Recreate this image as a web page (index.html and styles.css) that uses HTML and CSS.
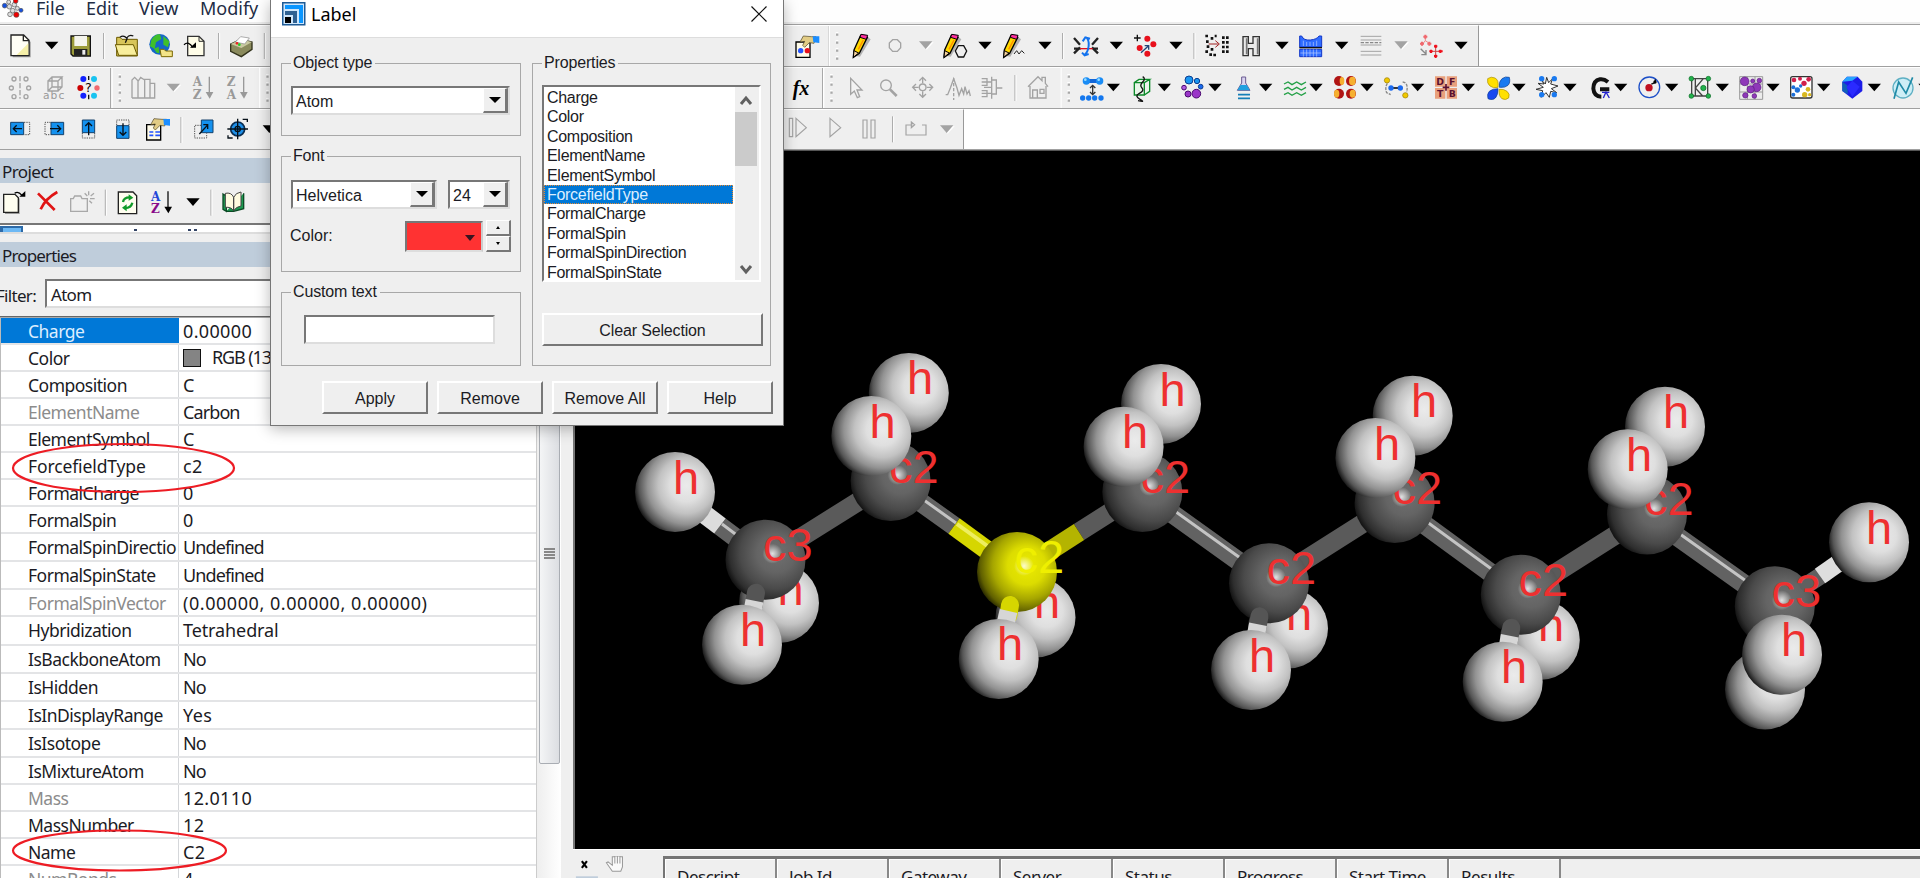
FILE: index.html
```
<!DOCTYPE html>
<html lang="en">
<head>
<meta charset="utf-8">
<title>Label</title>
<link rel="stylesheet" href="styles.css">
</head>
<body>
<svg class="defs" width="0" height="0">
  <defs>
    <g id="dn"><path d="M-20-11H20L0 12z"/></g>
    <g id="dng"><path d="M-18-8H24L3 14z" fill="#fff"/><path d="M-20-11H20L0 12z" fill="#a3a3a3"/></g>
    <g id="sep"><path d="M0-39V39" stroke="#a0a0a0" stroke-width="3"/><path d="M3-39V39" stroke="#fff" stroke-width="3"/></g>
    <g id="grip"><path d="M-27-60V60" stroke="#999" stroke-width="3"/><path d="M-23-60V60" stroke="#fff" stroke-width="4"/><path d="M-4-38h8M-4-14h8M-4 10h8M-4 34h8" stroke="#fff" stroke-width="8"/><path d="M-3-34h7M-3-10h7M-3 14h7M-3 38h7" stroke="#a8a8a8" stroke-width="7"/></g>
    <g id="pencil"><path d="M-14 30L20-28 30-20-2 32z" fill="#999" opacity=".7"/><path d="M-22 34L-20 12 0-32 20-26-4 22z" fill="#ffd800" stroke="#000" stroke-width="4"/><path d="M-22 34L-20 14-6 21z" fill="#f4d3a0" stroke="#000" stroke-width="3"/><path d="M-2-26l3-9 20 3-4 12z" fill="#ff2fa0" stroke="#000" stroke-width="3"/><path d="M-7 10L8-18" stroke="#ff8c00" stroke-width="4"/></g>
    <g id="props"><path d="M-34-14H8V32H-34z" fill="#fffbe8" stroke="#000" stroke-width="4"/><path d="M-22-14l10-18 24 2 14 0-6 20-14-2-14 14-6-6 6-12z" fill="#e2cc85" stroke="#4a4020" stroke-width="2"/><path d="M16-31h20v20l-18-2z" fill="#1b8dff"/></g>
    <radialGradient id="gh" cx=".64" cy=".42" r=".67"><stop offset="0" stop-color="#ebebeb"/><stop offset=".3" stop-color="#dfdfdf"/><stop offset=".52" stop-color="#c2c2c2"/><stop offset=".72" stop-color="#929292"/><stop offset=".88" stop-color="#565656"/><stop offset="1" stop-color="#0c0c0c"/></radialGradient>
    <radialGradient id="gc" cx=".63" cy=".42" r=".68"><stop offset="0" stop-color="#707070"/><stop offset=".35" stop-color="#646464"/><stop offset=".65" stop-color="#4a4a4a"/><stop offset=".85" stop-color="#2e2e2e"/><stop offset="1" stop-color="#060606"/></radialGradient>
    <radialGradient id="gs" cx=".62" cy=".42" r=".68"><stop offset="0" stop-color="#ecec00"/><stop offset=".35" stop-color="#dcdc00"/><stop offset=".62" stop-color="#a6a600"/><stop offset=".85" stop-color="#606000"/><stop offset="1" stop-color="#0c0c00"/></radialGradient>
    <radialGradient id="spec"><stop offset="0" stop-color="#fff" stop-opacity=".8"/><stop offset="1" stop-color="#fff" stop-opacity="0"/></radialGradient>
    <circle id="h" r="40" fill="url(#gh)"/>
    <g id="c"><circle r="40" fill="url(#gc)"/><circle cx="7" cy="-6" r="10" fill="url(#spec)"/></g>
    <g id="stub"><path d="M-9.500 33L-12 46" stroke="#555" stroke-width="18" stroke-linecap="round"/><path d="M-11 41L-17 72" stroke="#d6d6d6" stroke-width="18"/></g>
  </defs>
</svg>

<div class="app">
  <nav class="menubar">
    <svg class="logo" width="28" height="24" viewBox="0 0 84 72"><g stroke="#555" stroke-width="2"><g fill="#ddd"><circle cx="26" cy="6" r="6"/><circle cx="43" cy="14" r="7"/><circle cx="28" cy="20" r="7"/><circle cx="38" cy="32" r="7"/><circle cx="52" cy="25" r="6"/><circle cx="30" cy="43" r="7"/></g><circle cx="47" cy="3" r="7" fill="#e00"/><circle cx="14" cy="17" r="7" fill="#1550e0"/><circle cx="49" cy="44" r="8" fill="#e00"/><circle cx="63" cy="31" r="6" fill="#1550e0"/></g></svg>
    <span class="m1">File</span><span class="m2">Edit</span><span class="m3">View</span><span>Modify</span>
  </nav>

  <div class="bar">
    <div class="tools">
      <svg width="40" viewBox="0 75 120 123"><path d="M38 110h38l16 16v46H38z" fill="#999"/><path d="M33 105h38l16 16v46H33z" fill="#fffef5" stroke="#222" stroke-width="4"/><path d="M85 130v35H50z" fill="#f5efa8"/><path d="M70 105v17h17" fill="none" stroke="#222" stroke-width="4"/></svg>
      <svg width="23" viewBox="120 75 69 123"><use href="#dn" x="155" y="136"/></svg>
      <svg width="34" viewBox="189 75 102 123"><path d="M213 108h58v60h-52l-6-6z" fill="#9c9c3a" stroke="#111" stroke-width="4"/><path d="M223 108h38v30h-38z" fill="#f4f4ec"/><path d="M222 147h40v20h-40z" fill="#222"/><path d="M247 150h9v14h-9z" fill="#eee"/></svg>
      <svg width="13" viewBox="291 75 39 123"><use href="#sep" x="311" y="138"/></svg>
      <svg width="34" viewBox="330 75 102 123"><path d="M350 112h10l6 6h46v50h-62z" fill="#d8c55a" stroke="#6b5a00" stroke-width="3"/><path d="M346 134h54l12 32h-56z" fill="#f8ee9c" stroke="#6b5a00" stroke-width="3"/><path d="M360 112q10-8 20 2q8-12 20-6M376 128l6-14" fill="none" stroke="#111" stroke-width="4"/></svg>
      <svg width="34" viewBox="432 75 102 123"><circle cx="479" cy="133" r="31" fill="#1566c8"/><path d="M454 120q10-18 26-17l4 14-16 10-4 20-14-8zM490 108l18 16-4 18-14-8zM462 146l14-6 2 20-8-2z" fill="#3fc02a"/><path d="M480 148h12l5 5h20v17h-33z" fill="#f3e488" stroke="#7a6600" stroke-width="3"/></svg>
      <svg width="35" viewBox="534 75 105 123"><path d="M563 109h34l15 15v43h-49z" fill="#fffde8" stroke="#333" stroke-width="4"/><path d="M597 109v15h15" fill="none" stroke="#333" stroke-width="3"/><path d="M552 134q14-12 26 8" fill="none" stroke="#000" stroke-width="4"/><path d="M570 143h18v-16z"/></svg>
      <svg width="12" viewBox="639 75 36 123"><use href="#sep" x="656" y="138"/></svg>
      <svg width="34" viewBox="675 75 102 123"><path d="M692 132l30-14 34 8v22l-32 22-32-16z" fill="#8b8b5d" stroke="#33331c" stroke-width="4"/><path d="M692 132l32 12 32-18-34-8z" fill="#c9c9a0"/><path d="M706 126l16-16 26 4-14 18z" fill="#fff" stroke="#888" stroke-width="2"/><circle cx="711" cy="130" r="4" fill="#e22"/><circle cx="718" cy="134" r="4" fill="#2c2"/></svg>
      <svg width="11" viewBox="777 75 33 123"><use href="#sep" x="793" y="138"/></svg>
    </div>
    <div class="under"></div>
    <div class="tools edge">
      <svg width="44" viewBox="12 75 132 123"><use href="#props" x="82" y="140"/><circle cx="62" cy="152" r="8" fill="#2453ff"/><circle cx="82" cy="152" r="8" fill="#e8101c"/></svg>
      <svg width="18" viewBox="144 75 54 123"><use href="#grip" x="171" y="138"/></svg>
      <svg width="30" viewBox="198 75 90 123"><use href="#pencil" x="242" y="138"/></svg>
      <svg width="34" viewBox="288 75 102 123"><path d="M338 119h14l10 10v14l-10 11h-14l-10-11v-14z" fill="none" stroke="#a3a3a3" stroke-width="4"/></svg>
      <svg width="28" viewBox="390 75 84 123"><use href="#dng" x="437" y="135"/></svg>
      <svg width="36" viewBox="474 75 108 123"><use href="#pencil" x="514" y="138"/><path d="M535 137h16l9 16-9 18h-16l-9-18z" fill="#efefef" stroke="#111" stroke-width="4"/></svg>
      <svg width="24" viewBox="582 75 72 123"><use href="#dn" x="615" y="136"/></svg>
      <svg width="36" viewBox="654 75 108 123"><use href="#pencil" x="693" y="138"/><path d="M702 162l8-10 7 10 8-10 8 8" fill="none" stroke="#222" stroke-width="3"/></svg>
      <svg width="22" viewBox="762 75 66 123"><use href="#dn" x="795" y="136"/></svg>
      <svg width="12" viewBox="828 75 36 123"><use href="#sep" x="848" y="138"/></svg>
      <svg width="36" viewBox="864 75 108 123"><path d="M882 114l18 20M882 160l18-18M882 146h20M954 114l-18 20M954 160l-18-18M954 146h-16" fill="none" stroke="#222" stroke-width="7"/><path d="M900 146h38" stroke="#e01020" stroke-width="4"/><path d="M918 112q10 8 8 26t-12 26M908 124l8-12 14 4M906 158l8 8 12-4" fill="none" stroke="#1272ee" stroke-width="6"/></svg>
      <svg width="24" viewBox="972 75 72 123"><use href="#dn" x="1009" y="136"/></svg>
      <svg width="32" viewBox="1044 75 96 123"><path d="M1062 114h20M1072 104v20" stroke="#111" stroke-width="4"/><path d="M1083 158l22-20M1094 137h12v12" fill="none" stroke="#247" stroke-width="4"/><g fill="#e8101c"><circle cx="1102" cy="116" r="9"/><circle cx="1120" cy="133" r="9"/><circle cx="1079" cy="144" r="9"/><circle cx="1102" cy="161" r="9"/></g></svg>
      <svg width="28" viewBox="30 75 84 123"><use href="#dn" x="78" y="136"/></svg>
      <svg width="12" viewBox="114 75 36 123"><use href="#sep" x="132" y="138"/></svg>
      <svg width="36" viewBox="150 75 108 123"><path d="M166 108h8M182 115h8M168 125h8M170 140h8M182 148h8M166 155h8M178 164h8M194 108h6M190 165h8M216 113h24M216 127h24M216 141h24M216 155h24" stroke="#111" stroke-width="8" stroke-dasharray="8 4"/><path d="M176 132h28M196 122l12 10-12 10" fill="none" stroke="#a02020" stroke-width="3"/></svg>
      <svg width="30" viewBox="258 75 90 123"><path d="M279 110h16v20h14v-20h19v57h-19v-21h-14v21h-16z" fill="#e9e9e9" stroke="#333" stroke-width="4"/><path d="M290 115v48M323 115v48" stroke="#777" stroke-width="5"/></svg>
      <svg width="28" viewBox="348 75 84 123"><use href="#dn" x="396" y="136"/></svg>
      <svg width="34" viewBox="432 75 102 123"><path d="M449 108h6q6 14 26 12t26-12h8v33h-66zM449 148h66v22h-66z" fill="#2f6cff" stroke="#1538c8" stroke-width="3"/><path d="M460 122v16M470 126v12M480 126v12M490 126v12M500 122v16M451 159h62M460 148v22M470 148v22M480 148v22M490 148v22M500 148v22" stroke="#b8ccff" stroke-width="2"/><path d="M448 143h68" stroke="#111" stroke-width="4"/></svg>
      <svg width="28" viewBox="534 75 84 123"><use href="#dn" x="575" y="136"/></svg>
      <svg width="31" viewBox="618 75 93 123"><path d="M632 109h62M632 120h62M632 135h62M632 154h62M632 165h62" stroke="#a3a3a3" stroke-width="3"/><path d="M632 128h62" stroke="#888" stroke-width="4" stroke-dasharray="10 4"/></svg>
      <svg width="28" viewBox="711 75 84 123"><use href="#dng" x="753" y="135"/></svg>
      <svg width="33" viewBox="795 75 99 123"><path d="M826 110v12l-8 10M826 122l12 8" fill="none" stroke="#e88" stroke-width="3"/><path d="M820 110h12M826 104v12M810 131h12M816 125v12M832 131h12M838 125v12" stroke="#f0686e" stroke-width="6"/><path d="M812 146l16 16M828 150v14h-14" fill="none" stroke="#888" stroke-width="4"/><path d="M840 154h36M857 137v34" stroke="#c44" stroke-width="3"/><path d="M838 154h10M866 154h12M857 134v10M857 164v10M852 139h10M852 168h10M843 149v10M871 149v10" stroke="#f0101c" stroke-width="6"/></svg>
      <svg width="30" viewBox="894 75 90 123"><use href="#dn" x="933" y="136"/></svg>
    </div>
  </div>

  <div class="bar">
    <div class="tools">
      <svg width="37" viewBox="0 201 111 123"><g fill="none" stroke="#a3a3a3" stroke-width="4"><circle cx="42" cy="237" r="6"/><circle cx="78" cy="237" r="6"/><circle cx="34" cy="264" r="6"/><circle cx="86" cy="264" r="6"/><circle cx="42" cy="290" r="6"/><circle cx="78" cy="290" r="6"/><path d="M60 228v68" stroke-dasharray="16 5"/></g></svg>
      <svg width="35" viewBox="111 201 105 123"><path d="M144 243h30v30h-30zM144 243l12-12h30l-12 12M186 231v30l-12 12M156 231v30h30M144 273l12-12" fill="none" stroke="#a3a3a3" stroke-width="4"/><text x="129" y="298" class="ic" font-size="32" textLength="64" fill="#999">abc</text></svg>
      <svg width="38" viewBox="216 201 114 123"><circle cx="250" cy="237" r="9" fill="#12f"/><circle cx="282" cy="237" r="9" fill="#19c3f0"/><circle cx="241" cy="264" r="9" fill="#c00"/><circle cx="291" cy="264" r="8" fill="#f06a70"/><circle cx="250" cy="287" r="9" fill="#12f"/><circle cx="282" cy="287" r="9" fill="#19c3f0"/><text x="255" y="276" class="ic" font-size="38">?</text><path d="M266 228v12M266 284v14" stroke="#111" stroke-width="4"/></svg>
      <svg width="17" viewBox="330 201 51 123"><use href="#grip" x="359" y="264"/></svg>
      <svg width="35" viewBox="381 201 105 123"><path d="M396 294v-54l8-8 10 10v52M414 294v-50l8-12 12 8v54M434 294v-56h16v56M450 294v-44h14v44zM396 294h68" fill="none" stroke="#a3a3a3" stroke-width="4"/></svg>
      <svg width="25" viewBox="486 201 75 123"><use href="#dng" x="520" y="262"/></svg>
      <svg width="34" viewBox="561 201 102 123"><text x="578" y="258" class="az" fill="#999">A</text><text x="578" y="296" class="az" fill="#999">Z</text><path d="M628 230v54" stroke="#999" stroke-width="4"/><path d="M617 276h23l-11 20z" fill="#999"/></svg>
      <svg width="38" viewBox="663 201 114 123"><text x="680" y="258" class="az" fill="#999">Z</text><text x="680" y="296" class="az" fill="#999">A</text><path d="M731 230v54" stroke="#999" stroke-width="4"/><path d="M720 276h23l-11 20z" fill="#999"/></svg>
      <svg width="11" viewBox="777 201 33 123"><use href="#grip" x="802" y="264"/></svg>
    </div>
    <div class="under"></div>
    <div class="tools grow">
      <svg width="38" viewBox="12 201 114 123"><text x="38" y="284" class="fx">fx</text></svg>
      <svg width="20" viewBox="126 201 60 123"><use href="#grip" x="154" y="264"/></svg>
      <svg width="32" viewBox="186 201 96 123"><path d="M212 235v48l11-10 9 20 7-3-8-20h15z" fill="#f3f3f3" stroke="#a3a3a3" stroke-width="4"/></svg>
      <svg width="31" viewBox="282 201 93 123"><circle cx="318" cy="256" r="16" fill="none" stroke="#a3a3a3" stroke-width="4"/><path d="M330 268l20 20" stroke="#a3a3a3" stroke-width="8"/></svg>
      <svg width="34" viewBox="375 201 102 123"><circle cx="428" cy="262" r="10" fill="none" stroke="#a3a3a3" stroke-width="4"/><path d="M428 250v-18M428 274v18M416 262h-18M440 262h18M418 242l10-10 10 10M418 282l10 10 10-10M408 252l-10 10 10 10M448 252l10 10-10 10" fill="none" stroke="#a3a3a3" stroke-width="4"/></svg>
      <svg width="36" viewBox="477 201 108 123"><path d="M497 284h6l8-20 10-28 10 28 6 22 8-20 6 16 4-22 6 22 6-10 4 16" fill="none" stroke="#a3a3a3" stroke-width="4"/><path d="M521 234v66" stroke="#a3a3a3" stroke-width="4" stroke-dasharray="10 5"/></svg>
      <svg width="33" viewBox="585 201 99 123"><path d="M605 236h16v20h-16M605 246h16M621 246h14M605 272h16v18h-16M605 280h30M635 230v66M635 240h14v42h-14M649 264h18M612 262h22" fill="none" stroke="#a3a3a3" stroke-width="4"/></svg>
      <svg width="14" viewBox="684 201 42 123"><use href="#sep" x="705" y="264"/></svg>
      <svg width="38" viewBox="726 201 114 123"><path d="M744 260l30-30 12 12v-10h10v18l8 10M750 258v36h48v-36M758 294v-24h14v24M780 268h12v12h-12z" fill="none" stroke="#a3a3a3" stroke-width="4"/></svg>
      <svg width="17" viewBox="840 201 51 123"><use href="#grip" x="866" y="264"/></svg>
      <svg width="30" viewBox="891 201 90 123"><path d="M914 243h50" stroke="#1266d8" stroke-width="12"/><circle cx="919" cy="243" r="11" fill="#1a8cf5"/><circle cx="959" cy="243" r="11" fill="#1a8cf5"/><circle cx="916" cy="239" r="4" fill="#9df"/><circle cx="956" cy="239" r="4" fill="#9df"/><path d="M938 256v28M930 264l8-8 8 8M930 276l8 8 8-8" fill="none" stroke="#333" stroke-width="4"/><g fill="#1377ee"><circle cx="908" cy="294" r="8"/><circle cx="926" cy="294" r="8"/><circle cx="944" cy="294" r="8"/><circle cx="963" cy="294" r="8"/></g></svg>
      <svg width="19" viewBox="981 201 57 123"><use href="#dn" x="1000" y="262"/></svg>
      <svg width="29" viewBox="1038 201 87 123"><path d="M1063 248h30v37h-30zM1063 248l14-10h32l-16 10M1109 238v36l-16 11" fill="#e8f5e8" stroke="#0d8a2a" stroke-width="4"/><path d="M1088 230q10 6 0 16t-2 18-8 16 2 18-6 4" fill="none" stroke="#111" stroke-width="4"/></svg>
      <svg width="22" viewBox="15 201 66 123"><use href="#dn" x="43" y="262"/></svg>
      <svg width="31" viewBox="81 201 93 123"><circle cx="117" cy="240" r="12" fill="#1a96f0" stroke="#0b3d91" stroke-width="3"/><circle cx="141" cy="243" r="8" fill="#1a96f0" stroke="#0b3d91" stroke-width="3"/><circle cx="152" cy="260" r="7" fill="#1a6af0" stroke="#0b3d91" stroke-width="3"/><circle cx="139" cy="281" r="13" fill="#9a35c8" stroke="#4b0a70" stroke-width="3"/><circle cx="114" cy="282" r="9" fill="#9a35c8" stroke="#4b0a70" stroke-width="3"/><circle cx="102" cy="263" r="7" fill="#b05adf" stroke="#4b0a70" stroke-width="3"/></svg>
      <svg width="24" viewBox="174 201 72 123"><use href="#dn" x="195" y="262"/></svg>
      <svg width="25" viewBox="246 201 75 123"><path d="M275 231h12v18l13 22h-38l13-22z" fill="#d9d4f0" stroke="#6a5a90" stroke-width="3"/><path d="M272 255h18l10 16h-38z" fill="#20a0e0"/><path d="M264 284h36M264 295h36" stroke="#157fb8" stroke-width="5"/></svg>
      <svg width="22" viewBox="321 201 66 123"><use href="#dn" x="347" y="262"/></svg>
      <svg width="30" viewBox="387 201 90 123"><path d="M402 252l12-6 12 8 14-8 14 8 14-8M402 268l12-6 12 8 14-8 14 8 14-8M402 284l12-6 12 8 14-8 14 8 14-8" fill="none" stroke="#23a046" stroke-width="4"/></svg>
      <svg width="20" viewBox="477 201 60 123"><use href="#dn" x="498" y="262"/></svg>
      <svg width="31" viewBox="537 201 93 123"><g fill="#b01414"><ellipse cx="567" cy="243" rx="15" ry="15"/><ellipse cx="603" cy="243" rx="15" ry="15"/><ellipse cx="567" cy="281" rx="15" ry="15"/><ellipse cx="603" cy="281" rx="15" ry="15"/></g><g fill="#f6b030"><ellipse cx="576" cy="243" rx="7" ry="12"/><ellipse cx="607" cy="243" rx="10" ry="13"/><ellipse cx="560" cy="281" rx="8" ry="12"/><ellipse cx="608" cy="281" rx="9" ry="12"/></g></svg>
      <svg width="21" viewBox="630 201 63 123"><use href="#dn" x="651" y="262"/></svg>
      <svg width="30" viewBox="693 201 90 123"><path d="M722 264h32" stroke="#111" stroke-width="5"/><circle cx="723" cy="264" r="8" fill="#1a6af0"/><circle cx="751" cy="264" r="8" fill="#1a6af0"/><path d="M712 250q-8 14-2 28l12 6M758 246q18 2 12 30" fill="none" stroke="#888" stroke-width="4" stroke-dasharray="9 3"/><circle cx="711" cy="241" r="8" fill="#f0c800" stroke="#9a7c00" stroke-width="2"/><circle cx="766" cy="286" r="8" fill="#f0c800" stroke="#9a7c00" stroke-width="2"/></svg>
      <svg width="20" viewBox="783 201 60 123"><use href="#dn" x="803" y="262"/></svg>
      <svg width="30" viewBox="843 201 90 123"><path d="M855 229h31v31h-31zM890 229h31v31h-31zM855 264h31v32h-31zM890 264h31v32h-31z" fill="#e9a07c"/><g class="ic" font-size="28" font-weight="bold" fill="#5b1030"><text x="859" y="254">D</text><text x="897" y="254">F</text><text x="861" y="291">T</text><text x="896" y="291">B</text></g><path d="M888 252v20M878 262h20" stroke="#5b1030" stroke-width="5"/></svg>
      <svg width="21" viewBox="933 201 63 123"><use href="#dn" x="955" y="262"/></svg>
      <svg width="29" viewBox="996 201 87 123"><path d="M1013 236q10-8 22-2t9 28q-14 4-24-4t-7-22z" fill="#ffe000" stroke="#a88b00" stroke-width="2"/><path d="M1078 232q4 16-4 24t-26 6q-2-18 8-26t22-4z" fill="#1a7af0" stroke="#0b3d91" stroke-width="2"/><path d="M1014 296q-4-14 4-22t26-8q0 20-8 28t-22 2z" fill="#1a4af0" stroke="#0b3d91" stroke-width="2"/><path d="M1076 294q-10 8-20 2t-9-28q14-2 24 6t5 20z" fill="#ffe000" stroke="#a88b00" stroke-width="2"/></svg>
      <svg width="21" viewBox="1083 201 63 123"><use href="#dn" x="1107" y="262"/></svg>
      <svg width="30" viewBox="-24 201 90 123"><path d="M4 240l12 12 4-20 6 16 12-12-6 16 22 6-20 8 16 12-18-4-4 18-10-14-14 14 4-20-20-4 22-6-16-12 18 2z" fill="#fff" stroke="#333" stroke-width="3"/><g fill="#1a7af0"><circle cx="5" cy="236" r="8"/><circle cx="43" cy="236" r="8"/><circle cx="5" cy="284" r="8"/><circle cx="43" cy="284" r="8"/></g></svg>
      <svg width="21" viewBox="66 201 63 123"><use href="#dn" x="90" y="262"/></svg>
      <svg width="30" viewBox="129 201 90 123"><path d="M204 246q-12-10-24-8-20 4-20 28 2 24 24 24M180 268h28" fill="none" stroke="#111" stroke-width="12"/><path d="M190 294l8-18 10 18M186 277h22" stroke="#22c" stroke-width="4" fill="none"/></svg>
      <svg width="21" viewBox="219 201 63 123"><use href="#dn" x="242" y="262"/></svg>
      <svg width="31" viewBox="282 201 93 123"><circle cx="328" cy="262" r="31" fill="none" stroke="#1c4fc8" stroke-width="4"/><circle cx="327" cy="263" r="11" fill="#c01020"/><path d="M334 252q14-2 12-14" fill="none" stroke="#111" stroke-width="4"/><circle cx="345" cy="246" r="5"/></svg>
      <svg width="20" viewBox="375 201 60 123"><use href="#dn" x="395" y="262"/></svg>
      <svg width="30" viewBox="435 201 90 123"><path d="M455 236h48v52h-48zM466 236v52M490 236l-24 28 22 24" fill="none" stroke="#444" stroke-width="4"/><g fill="#22b14c" stroke="#0a6a24" stroke-width="2"><circle cx="454" cy="236" r="7"/><circle cx="505" cy="236" r="7"/><circle cx="454" cy="288" r="7"/><circle cx="505" cy="288" r="7"/><circle cx="490" cy="264" r="8"/></g></svg>
      <svg width="20" viewBox="525 201 60 123"><use href="#dn" x="547" y="262"/></svg>
      <svg width="31" viewBox="585 201 93 123"><path d="M599 230h69v68h-69zM599 252h69M599 276h69M622 230v68M645 230v68" fill="#ececec" stroke="#999" stroke-width="3"/><g fill="#8e38b8" stroke="#5b1a80" stroke-width="2"><circle cx="614" cy="244" r="13"/><circle cx="650" cy="262" r="13"/><circle cx="632" cy="268" r="11"/><circle cx="658" cy="242" r="7"/><circle cx="616" cy="286" r="8"/><circle cx="643" cy="288" r="7"/><circle cx="638" cy="243" r="6"/></g></svg>
      <svg width="20" viewBox="678 201 60 123"><use href="#dn" x="699" y="262"/></svg>
      <svg width="31" viewBox="738 201 93 123"><rect x="752" y="230" width="64" height="64" rx="6" fill="#fff" stroke="#333" stroke-width="4"/><g fill="#d0204c"><circle cx="762" cy="240" r="7"/><circle cx="780" cy="236" r="6"/><circle cx="792" cy="250" r="8"/><circle cx="806" cy="238" r="7"/></g><g fill="#1c6fd8"><circle cx="760" cy="262" r="6"/><circle cx="772" cy="270" r="8"/><circle cx="760" cy="284" r="6"/><circle cx="782" cy="258" r="5"/></g><g fill="#d8b820"><circle cx="804" cy="268" r="7"/><circle cx="794" cy="284" r="8"/><circle cx="809" cy="284" r="5"/></g></svg>
      <svg width="20" viewBox="831 201 60 123"><use href="#dn" x="851" y="262"/></svg>
      <svg width="30" viewBox="891 201 90 123"><path d="M921 230h32l14 15v28l-30 23-30-23v-28z" fill="#1c1ce8"/><path d="M921 230h32l-16 12-30 3z" fill="#28a4ff"/><path d="M907 245l16 12v26l-16-10z" fill="#1060b8"/><path d="M937 242l22 18-22 30-18-28z" fill="#2a2aff"/></svg>
      <svg width="20" viewBox="981 201 60 123"><use href="#dn" x="1003" y="262"/></svg>
      <svg width="34" viewBox="1041 201 102 123"><circle cx="1089" cy="264" r="30" fill="#cdeef6" stroke="#5fb0c4" stroke-width="4"/><path d="M1062 296l14-50 22 34 20-48" fill="none" stroke="#1e8aa6" stroke-width="5"/><use href="#dn" x="1155" y="262"/></svg>
    </div>
  </div>

  <div class="bar third">
    <div class="tools">
      <svg width="36" viewBox="0 327 108 120"><path d="M72 367h17v37h-17" class="dots"/><path d="M32 367h39v37h-39z" class="bl"/><path d="M66 386h-26M50 376l-10 10 10 10" class="ar"/></svg>
      <svg width="34" viewBox="108 327 102 120"><path d="M152 367h-17v37h17" class="dots"/><path d="M153 367h38v37h-38z" class="bl"/><path d="M150 386h30M172 376l10 10-10 10" class="ar"/></svg>
      <svg width="34" viewBox="210 327 102 120"><path d="M247 399v15h37v-15" class="dots"/><path d="M247 360h37v38h-37z" class="bl"/><path d="M266 406v-38M256 378l10-10 10 10" class="ar"/></svg>
      <svg width="36" viewBox="312 327 108 120"><path d="M350 375v-15h37v15" class="dots"/><path d="M350 377h37v38h-37z" class="bl"/><path d="M369 370v36M359 396l10 10 10-10" class="ar"/></svg>
      <svg width="35" viewBox="420 327 105 120"><use href="#props" x="474" y="388"/><path d="M448 396h12M466 396h14M448 406h12M466 406h14" stroke="#2453ff" stroke-width="5"/></svg>
      <svg width="12" viewBox="525 327 36 120"><use href="#sep" x="543" y="390"/></svg>
      <svg width="36" viewBox="561 327 108 120"><path d="M603 376h-19v38h36v-14" class="dots"/><path d="M604 360h35v38h-35z" class="bl"/><path d="M598 402l24-26M610 374h13v13" class="ar"/></svg>
      <svg width="33" viewBox="669 327 99 120"><circle cx="713" cy="387" r="21" fill="#1e8fe8" stroke="#0a2c50" stroke-width="5"/><path d="M713 356v62M682 387h62" class="ar"/><circle cx="713" cy="387" r="8" class="ar"/><path d="M728 358h14v8M698 414h-14v-8" class="ar"/></svg>
      <svg width="14" viewBox="768 327 42 120"><use href="#dn" x="808" y="387"/></svg>
    </div>
    <div class="under"></div>
    <div class="tools edge">
      <svg width="30" viewBox="12 327 90 120"><path d="M28 355h10v55h-10zM48 355l31 28-31 27z" class="gl"/></svg>
      <svg width="36" viewBox="102 327 108 120"><path d="M150 355l32 28-32 27z" class="gl"/></svg>
      <svg width="36" viewBox="210 327 108 120"><path d="M249 360h12v54h-12zM273 360h12v54h-12z" class="gl"/></svg>
      <svg width="13" viewBox="318 327 39 120"><use href="#sep" x="338" y="388"/></svg>
      <svg width="34" viewBox="357 327 102 120"><path d="M388 375h-10v30h60v-30h-12M388 375h10M394 366l10 8-10 9z" class="gl"/></svg>
      <svg width="30" viewBox="459 327 90 120"><use href="#dng" x="500" y="387"/></svg>
    </div>
  </div>

  <main class="work">
    <aside class="side">
      <h2 class="cap">Project</h2>
      <div class="ptools">
        <svg width="36" viewBox="0 552 108 117"><path d="M15 586h34l10 10v46h-44z" fill="#999"/><path d="M11 583h34l10 10v44h-44z" fill="#fffef0" stroke="#222" stroke-width="4"/><path d="M44 580q10-8 22 6" fill="none" stroke="#000" stroke-width="4"/><path d="M58 590h18v-17z"/></svg>
        <svg width="32" viewBox="108 552 96 117"><path d="M114 580l50 50M172 576q-36 20-50 52" fill="none" stroke="#e01414" stroke-width="8"/></svg>
        <svg width="34" viewBox="204 552 102 117"><path d="M212 634v-38h8l4-8h18l4 8h16v38z" fill="none" stroke="#a8a8a8" stroke-width="4"/><path d="M266 574v12M254 580l8 8M282 580l-10 8M270 596h14M268 602l8 8" stroke="#a8a8a8" stroke-width="4"/></svg>
        <svg width="36" viewBox="306 552 108 117"><use href="#sep" x="316" y="608"/><path d="M355 576h44l11 11v54h-55z" fill="#fffef0" stroke="#222" stroke-width="4"/><path d="M369 606q2-14 20-14M397 608q-4 16-22 16" fill="none" stroke="#109a28" stroke-width="7"/><path d="M386 583l14 10-14 9zM380 613l-14 10 14 11z" fill="#109a28"/></svg>
        <svg width="36" viewBox="414 552 108 117"><text x="453" y="604" class="az" fill="#2546d8">A</text><text x="453" y="640" class="az" fill="#8a0a8a">Z</text><path d="M504 574v56" stroke="#111" stroke-width="4"/><path d="M493 620h23l-11 20z"/></svg>
        <svg width="34" viewBox="522 552 102 117"><use href="#dn" x="579" y="606"/></svg>
        <svg width="46" viewBox="624 552 138 117"><use href="#sep" x="633" y="608"/><path d="M669 582l10 6v46l-10-6zM679 634h22l30-8v-46" fill="#1c9a50" stroke="#0b4a24" stroke-width="4"/><path d="M676 580q18-4 25 12v40q-8-12-25-10zM701 592q6-14 22-16v42q-14 2-22 14z" fill="#fffbe0" stroke="#444" stroke-width="3"/></svg>
      </div>
      <div class="tree"><svg width="270" height="7" viewBox="0 0 270 7"><path d="M0 1h23v6H0z" fill="#2d6aa8"/><path d="M3 3h18v4H3z" fill="#6cb8f4"/><path d="M134 5h3M188 5h3M194 5h3" stroke="#346" stroke-width="2"/></svg></div>
      <h2 class="cap cap2">Properties</h2>
      <div class="filter"><span>Filter:</span><div class="fbox">Atom</div></div>
      <div class="gridwrap">
        <div class="grid">
          <div class="r sel"><b>Charge</b><i>0.00000</i></div>
          <div class="r"><b>Color</b><i class="rgb"><span class="chip"></span>RGB (132, 132, 132)</i></div>
          <div class="r"><b>Composition</b><i>C</i></div>
          <div class="r dim"><b>ElementName</b><i class="word">Carbon</i></div>
          <div class="r"><b>ElementSymbol</b><i>C</i></div>
          <div class="r"><b class="wide">ForcefieldType</b><i>c2</i></div>
          <div class="r"><b>FormalCharge</b><i>0</i></div>
          <div class="r"><b>FormalSpin</b><i>0</i></div>
          <div class="r tall"><b>FormalSpinDirectio</b><i class="word">Undefined</i></div>
          <div class="r tall"><b>FormalSpinState</b><i class="word">Undefined</i></div>
          <div class="r dim"><b>FormalSpinVector</b><i class="nums">(0.00000, 0.00000, 0.00000)</i></div>
          <div class="r tall"><b>Hybridization</b><i class="tetra">Tetrahedral</i></div>
          <div class="r tall"><b>IsBackboneAtom</b><i class="word">No</i></div>
          <div class="r tall"><b>IsHidden</b><i class="word">No</i></div>
          <div class="r tall"><b>IsInDisplayRange</b><i>Yes</i></div>
          <div class="r tall"><b>IsIsotope</b><i class="word">No</i></div>
          <div class="r"><b>IsMixtureAtom</b><i class="word">No</i></div>
          <div class="r dim"><b>Mass</b><i>12.0110</i></div>
          <div class="r"><b>MassNumber</b><i>12</i></div>
          <div class="r"><b>Name</b><i>C2</i></div>
          <div class="r dim"><b>NumBonds</b><i>4</i></div>
        </div>
        <div class="sbar"><div class="sthumb"><span></span><span></span><span></span><span></span></div></div>
      </div>
    </aside>

    <section class="right">
      <div class="view">
        <svg class="mol" width="1344" height="698" viewBox="576 152 1344 698">
          <g stroke-width="19">
            <path d="M765 561L891 482M1079 533L1142 493M1269 584L1395 504M1521 596L1647 516" stroke="#5a5a5a"/>
            <path d="M891 482L954 527M1142 493L1269 584M1395 504L1521 596M1647 516L1775 607M720 527L765 561" stroke="#626262"/>
            <path d="M1017 573L1079 533" stroke="#b4b400"/>
            <path d="M954 527L1017 573" stroke="#d6d600"/>
            <path d="M675 493L720 527" stroke="#dcdcdc"/>
          </g>
          <path d="M893 479L956 524M1144 490L1271 581M1397 501L1523 593M1649 513L1777 604M722 525L767 559" stroke="#c4c4c4" stroke-width="3"/>
          <path d="M957 525L1019 570" stroke="#eeee60" stroke-width="4"/>

          <g><use href="#h" x="675" y="493"/><text x="673" y="495">h</text></g>
          <g><use href="#h" x="779" y="604"/><text x="777.500" y="606">h</text></g>
          <use href="#c" x="765.500" y="560.700"/><use href="#stub" x="765.500" y="560.700"/><text x="763" y="562">c3</text>
          <use href="#h" x="742" y="645.700"/><text x="740" y="647">h</text>

          <use href="#h" x="908.800" y="394"/><text x="907" y="395">h</text>
          <use href="#c" x="890.600" y="482"/><text x="889" y="483.500">c2</text>
          <use href="#h" x="871.300" y="437"/><text x="869.500" y="438.500">h</text>

          <use href="#h" x="1035.500" y="618.500"/><text x="1034" y="619">h</text>
          <circle cx="1017" cy="573" r="40" fill="url(#gs)"/><circle cx="1024" cy="567" r="10" fill="url(#spec)"/>
          <path d="M1010 606L1008.500 616" stroke="#d6d600" stroke-width="18" stroke-linecap="round"/><path d="M1008.500 612L1002 640" stroke="#d6d6d6" stroke-width="18"/>
          <text x="1014.500" y="574" class="picked">c2</text>
          <use href="#h" x="998.700" y="660"/><text x="997" y="661">h</text>

          <use href="#h" x="1161" y="405"/><text x="1159.500" y="407">h</text>
          <use href="#c" x="1142.300" y="493"/><text x="1140.500" y="493.500">c2</text>
          <use href="#h" x="1123.600" y="447.700"/><text x="1122" y="449">h</text>

          <use href="#h" x="1288" y="629.500"/><text x="1286" y="631">h</text>
          <use href="#c" x="1269" y="584.300"/><use href="#stub" x="1269" y="584.300"/><text x="1266.500" y="585">c2</text>
          <use href="#h" x="1251" y="671"/><text x="1249" y="672.500">h</text>

          <use href="#h" x="1412.700" y="416.700"/><text x="1411" y="418">h</text>
          <use href="#c" x="1394.600" y="504"/><text x="1392.500" y="505">c2</text>
          <use href="#h" x="1375.400" y="459"/><text x="1374" y="460.500">h</text>

          <use href="#h" x="1539.800" y="641"/><text x="1538" y="641.500">h</text>
          <use href="#c" x="1520.800" y="595.700"/><use href="#stub" x="1520.800" y="595.700"/><text x="1518.500" y="596.500">c2</text>
          <use href="#h" x="1502.700" y="682.700"/><text x="1501" y="684">h</text>

          <use href="#h" x="1665" y="427.700"/><text x="1663" y="429">h</text>
          <use href="#c" x="1647" y="515.500"/><text x="1644" y="516">c2</text>
          <use href="#h" x="1627.700" y="470.300"/><text x="1626" y="471.500">h</text>

          <use href="#c" x="1774.800" y="607.300"/>
          <path d="M1808 585L1825 574" stroke="#606060" stroke-width="17" stroke-linecap="round"/><path d="M1820 577L1850 556" stroke="#dedede" stroke-width="18"/>
          <text x="1771.500" y="608">c3</text>
          <use href="#h" x="1869" y="543.300"/><text x="1866" y="544.500">h</text>
          <use href="#h" x="1765" y="690.500"/>
          <use href="#h" x="1782" y="655.700"/><text x="1781" y="656.500">h</text>
        </svg>
      </div>
      <div class="jobs">
        <div class="jtool"><svg width="60" height="26" viewBox="0 0 60 26"><path d="M5 6l6 8M11 6l-6 8" stroke="#000" stroke-width="2.500"/><path d="M41 18l-7-10 2-1 5 4v-10h3v8-9h3v9-9h3v9-8h3v12l-2 5z" fill="#fafafa" stroke="#999" stroke-width="1.200"/><path d="M-2 24h26v3h-26z" fill="#bfcddb"/></svg></div>
        <div class="jhead"><span>Descript</span><span>Job Id</span><span>Gateway</span><span>Server</span><span>Status</span><span>Progress</span><span>Start Time</span><span>Results</span></div>
      </div>
    </section>
  </main>

  <svg class="marks" width="280" height="878" viewBox="0 0 280 878"><ellipse cx="123.500" cy="468" rx="110.500" ry="24"/><ellipse cx="119.500" cy="850.500" rx="106.500" ry="20"/></svg>

  <div class="dialog">
    <header class="dtitle">
      <svg width="24" height="24" viewBox="0 0 24 24"><path d="M.75.750h22v22H.750z" fill="#cfe6fb" stroke="#1e5b96" stroke-width="1.500"/><path d="M3 3h18v18h-4V7H3z" fill="#0a96ff"/><path d="M3 9h12v12h-4v-8H3z" fill="#2f6192"/><path d="M3 15h6v6H3z"/></svg>
      <span>Label</span>
      <svg class="close" width="16" height="16" viewBox="0 0 16 16"><path d="M.5.500l15 15M15.500.500l-15 15" stroke="#111" stroke-width="1.200"/></svg>
    </header>
    <div class="dbody">
      <div class="cols">
        <div class="col">
          <fieldset class="g1"><legend>Object type</legend><div class="combo wide"><span>Atom</span><u></u></div></fieldset>
          <fieldset class="g2"><legend>Font</legend>
            <div class="frow"><div class="combo"><span>Helvetica</span><u></u></div><div class="combo size"><span>24</span><u></u></div></div>
            <div class="crow"><span class="cl">Color:</span><div class="swatch"></div><div class="spin"><em class="up"></em><em></em></div></div>
          </fieldset>
          <fieldset class="g3"><legend>Custom text</legend><div class="entry"></div></fieldset>
        </div>
        <fieldset class="g4"><legend>Properties</legend>
          <div class="list">
            <ul><li>Charge</li><li>Color</li><li>Composition</li><li>ElementName</li><li>ElementSymbol</li><li class="on">ForcefieldType</li><li>FormalCharge</li><li>FormalSpin</li><li>FormalSpinDirection</li><li>FormalSpinState</li></ul>
            <div class="lsb"><svg width="22" height="25" viewBox="0 0 22 25"><path d="M6 17l5-6 5 6" fill="none" stroke="#606060" stroke-width="3"/></svg><div class="lth"></div><svg class="bot" width="22" height="25" viewBox="0 0 22 25"><path d="M6 11l5 6 5-6" fill="none" stroke="#606060" stroke-width="3"/></svg></div>
          </div>
          <div class="btn clear">Clear Selection</div>
        </fieldset>
      </div>
      <div class="btns"><div class="btn">Apply</div><div class="btn">Remove</div><div class="btn">Remove All</div><div class="btn">Help</div></div>
    </div>
  </div>
</div>
</body>
</html>
```
FILE: styles.css
```
* { box-sizing: border-box; }
body { margin: 0; width: 1920px; height: 878px; overflow: hidden; background: #efefef; color: #1b1b24; font: 17px "Noto Sans", sans-serif; }
.defs { position: absolute; }
svg { display: block; flex: none; }
.app { position: relative; width: 1920px; height: 878px; overflow: hidden; display: flex; flex-direction: column; }

/* menu and toolbars */
.menubar { height: 25px; background: #fefefe; border-bottom: 1px solid #a0a0a0; display: flex; line-height: 19px; font-size: 18px; color: #222c44; box-shadow: inset 0 -2px #ececec; }
.menubar span { margin-top: -1px; }
.menubar .m1 { width: 50px; }
.menubar .m2 { width: 53px; }
.menubar .m3 { width: 61px; }
.menubar .logo { margin-right: 8px; }
.bar { height: 42px; display: flex; background: #fff; border-bottom: 1px solid #a0a0a0; }
.bar.third { height: 41px; }
.tools { display: flex; background: #efefef; border-top: 1px solid #fff; }
.tools svg { height: 41px; margin-top: -1px; }
.third .tools svg { height: 40px; }
.under { width: 514px; flex: none; background: #efefef; }
.edge { border-right: 1px solid #999; }
.grow { flex: 1; overflow: hidden; }
.ic { font-family: "DejaVu Sans", sans-serif; }
.az { font: bold 36px "DejaVu Serif", serif; }
.fx { font: italic bold 60px "Liberation Serif", serif; }
.bl { fill: #1491ee; stroke: #14406b; stroke-width: 3; }
.ar { fill: none; stroke: #061018; stroke-width: 4; }
.dots { fill: none; stroke: #555; stroke-width: 3; stroke-dasharray: 4 3; }
.gl { fill: none; stroke: #a3a3a3; stroke-width: 3.5; }

/* left panels */
.work { flex: 1; display: flex; min-height: 0; }
.side { width: 566px; flex: none; padding-top: 8px; display: flex; flex-direction: column; overflow: hidden; }
.cap { margin: 0; height: 25px; flex: none; background: #bfcddb; padding-left: 2px; font-size: 17px; font-weight: normal; line-height: 27px; letter-spacing: -.6px; }
.ptools { height: 40px; flex: none; display: flex; }
.ptools svg { height: 39px; margin-top: 1px; }
.tree { height: 11px; flex: none; border-top: 2px solid #777; background: #fff; border-bottom: 2px solid #ddd; }
.cap2 { margin-top: 8px; letter-spacing: -.85px; }
.filter { height: 50px; flex: none; display: flex; padding-top: 12px; border-bottom: 1px solid #666; letter-spacing: -.7px; }
.filter > span { width: 45px; margin-left: -4px; line-height: 34px; }
.fbox { margin-left: 4px; width: 517px; height: 29px; background: #fff; border: 2px solid #777; border-right: 0; border-bottom-color: #ddd; padding-left: 4px; line-height: 27px; }
.gridwrap { flex: 1; display: flex; min-height: 0; border-top: 1px solid #aaa; overflow: hidden; }
.grid { width: 537px; flex: none; border-left: 1px solid #bbb; border-right: 1px solid #ccc; background: #fff; }
.r { height: 27px; display: flex; border-bottom: 2px solid #e3e4e6; line-height: 27px; font-size: 18px; }
.r.tall { height: 28.2px; }
.r b { width: 178px; flex: none; font-weight: normal; padding-left: 27px; border-right: 1px solid #d5d7da; overflow: hidden; white-space: nowrap; letter-spacing: -.5px; font-size: 17.500px; }
.r b.wide { letter-spacing: -.12px; }
.r i { font-style: normal; padding-left: 4px; white-space: nowrap; letter-spacing: .35px; }
.r i.word { letter-spacing: -.9px; }
.r i.tetra { letter-spacing: -.1px; }
.r i.nums { letter-spacing: .55px; }
.r.dim b { color: #8c8c8c; }
.r.sel b { background: #0078d7; color: #dceeff; border-right-color: #0078d7; }
.r i.rgb { display: flex; align-items: center; letter-spacing: -1.1px; }
.chip { width: 18px; height: 18px; background: #848484; border: 1.500px solid #111; margin-right: 11px; }
.sbar { width: 24px; padding-left: 2px; background: linear-gradient(90deg, #eee, #fff); }
.sthumb { width: 21px; height: 446px; border: 1px solid #a9adb3; border-radius: 0 0 2px 2px; background: linear-gradient(90deg, #f4f5f6, #dcdee2); padding: 229px 0 0 4px; display: flex; flex-direction: column; gap: 1px; }
.sthumb span { width: 11px; height: 2px; background: #888; }

/* structure view and job table */
.right { flex: 1; display: flex; flex-direction: column; padding-left: 7px; min-width: 0; }
.view { height: 699px; flex: none; background: #000; border-left: 2px solid #777; border-top: 1px solid #555; }
.view svg { margin-left: 1px; }
.mol text { font: 47px "Liberation Sans", sans-serif; fill: #ee3030; }
.mol .picked { fill: #efef00; }
.jobs { flex: 1; display: flex; border-top: 1px solid #fff; padding-top: 6px; }
.jtool { width: 90px; flex: none; }
.jtool svg { height: 22px; }
.jhead { flex: 1; display: flex; border-top: 3px solid #757575; border-left: 2px solid #757575; overflow: hidden; }
.jhead span { width: 112px; flex: none; padding-left: 12px; border-right: 2px solid #888; height: 25px; line-height: 35px; letter-spacing: -.5px; white-space: nowrap; overflow: hidden; box-shadow: inset 1px 1px #fff; }
.marks { position: absolute; left: 0; top: 0; fill: none; stroke: #ed1c24; stroke-width: 2.200; }

/* Label dialog */
.dialog { position: absolute; left: 270px; top: 0; width: 514px; height: 426px; background: #efefef; border: 1px solid #777; border-top: 0; box-shadow: 0 3px 14px rgba(0,0,0,.28); font: 16px "Liberation Sans", sans-serif; }
.dtitle { height: 38px; background: #fff; display: flex; padding: 2px 16px 0 11px; color: #000; font: 18px "Noto Sans", sans-serif; border-bottom: 1px solid #ddd; }
.dtitle span { margin-left: 5px; line-height: 25px; flex: 1; }
.dtitle .close { margin-top: 4px; }
.dbody { padding: 15px 10px 0; }
.cols { display: flex; gap: 11px; }
.col { width: 240px; display: flex; flex-direction: column; gap: 10px; }
fieldset { margin: 0; padding: 0 0 0 9px; min-width: 0; border: 1px solid #a8a8a8; }
legend { padding: 0 3px 0 2px; margin-left: 0; line-height: 20px; height: 20px; letter-spacing: -.15px; }
.g1 { height: 83px; }
.g2 { height: 126px; }
.g3 { height: 84px; }
.g4 { width: 239px; height: 313px; }
.combo { width: 146px; height: 29px; background: #fff; border: 2px solid #777; border-right-color: #ddd; border-bottom-color: #ddd; display: flex; line-height: 28px; padding-left: 3px; }
.combo span { flex: 1; }
.combo u { width: 25px; height: 25px; background: #efefef; border: 1px solid #fff; border-right: 3px solid #777; border-bottom: 2px solid #777; display: flex; align-items: center; justify-content: center; }
.combo u::before { content: ""; border: 6px solid transparent; border-top: 6.500px solid #000; border-bottom: 0; }
.combo.wide { width: 219px; margin-top: 13px; }
.combo.size { width: 62px; }
.frow { display: flex; gap: 11px; margin-top: 14px; }
.crow { display: flex; margin-top: 11px; height: 32px; }
.cl { width: 115px; line-height: 32px; margin-left: -1px; }
.swatch { width: 78px; height: 31px; margin-top: 1px; background: #ff3232; border: 2px solid #777; border-right-color: #ccc; border-bottom-color: #ddd; padding: 12px 0 0 58px; }
.swatch::before { content: ""; display: block; width: 0; border: 5px solid transparent; border-top: 6px solid #3a1420; border-bottom: 0; }
.spin { margin-left: 3px; width: 25px; display: flex; flex-direction: column; }
.spin em { height: 16px; border: 1px solid #fff; border-right: 2px solid #777; border-bottom: 2px solid #777; display: flex; align-items: center; justify-content: center; }
.spin em::before { content: ""; border: 2.500px solid transparent; border-top: 3.500px solid #000; border-bottom: 0; }
.spin .up::before { border-top: 0; border-bottom: 3.500px solid #000; }
.entry { margin: 13px 0 0 13px; width: 191px; height: 29px; background: #fff; border: 2px solid #777; border-right-color: #ddd; border-bottom-color: #ddd; }
.list { margin-top: 12px; width: 219px; height: 197px; border: 2px solid #777; border-right-color: #fff; border-bottom-color: #fff; display: flex; background: #fff; overflow: hidden; }
ul { margin: 0; padding: 1px 0 0; list-style: none; flex: 1; }
li { height: 19.400px; line-height: 20px; padding-left: 3px; white-space: nowrap; letter-spacing: -.3px; }
.on { background: #0078d7; color: #dceeff; outline: 1px dotted #e88a30; outline-offset: -1px; margin-right: 2px; }
.lsb { width: 24px; background: #efefef; display: flex; flex-direction: column; }
.lth { height: 54px; width: 22px; background: #cbcbcb; }
.lsb .bot { margin-top: auto; }
.btn { width: 106px; height: 33px; border: 2px solid #fff; border-right: 2px solid #777; border-bottom: 2px solid #777; text-align: center; line-height: 31px; }
.clear { width: 221px; margin-top: 31px; letter-spacing: -.15px; }
.btns { display: flex; gap: 9px; justify-content: flex-end; margin-top: 15px; }
```
